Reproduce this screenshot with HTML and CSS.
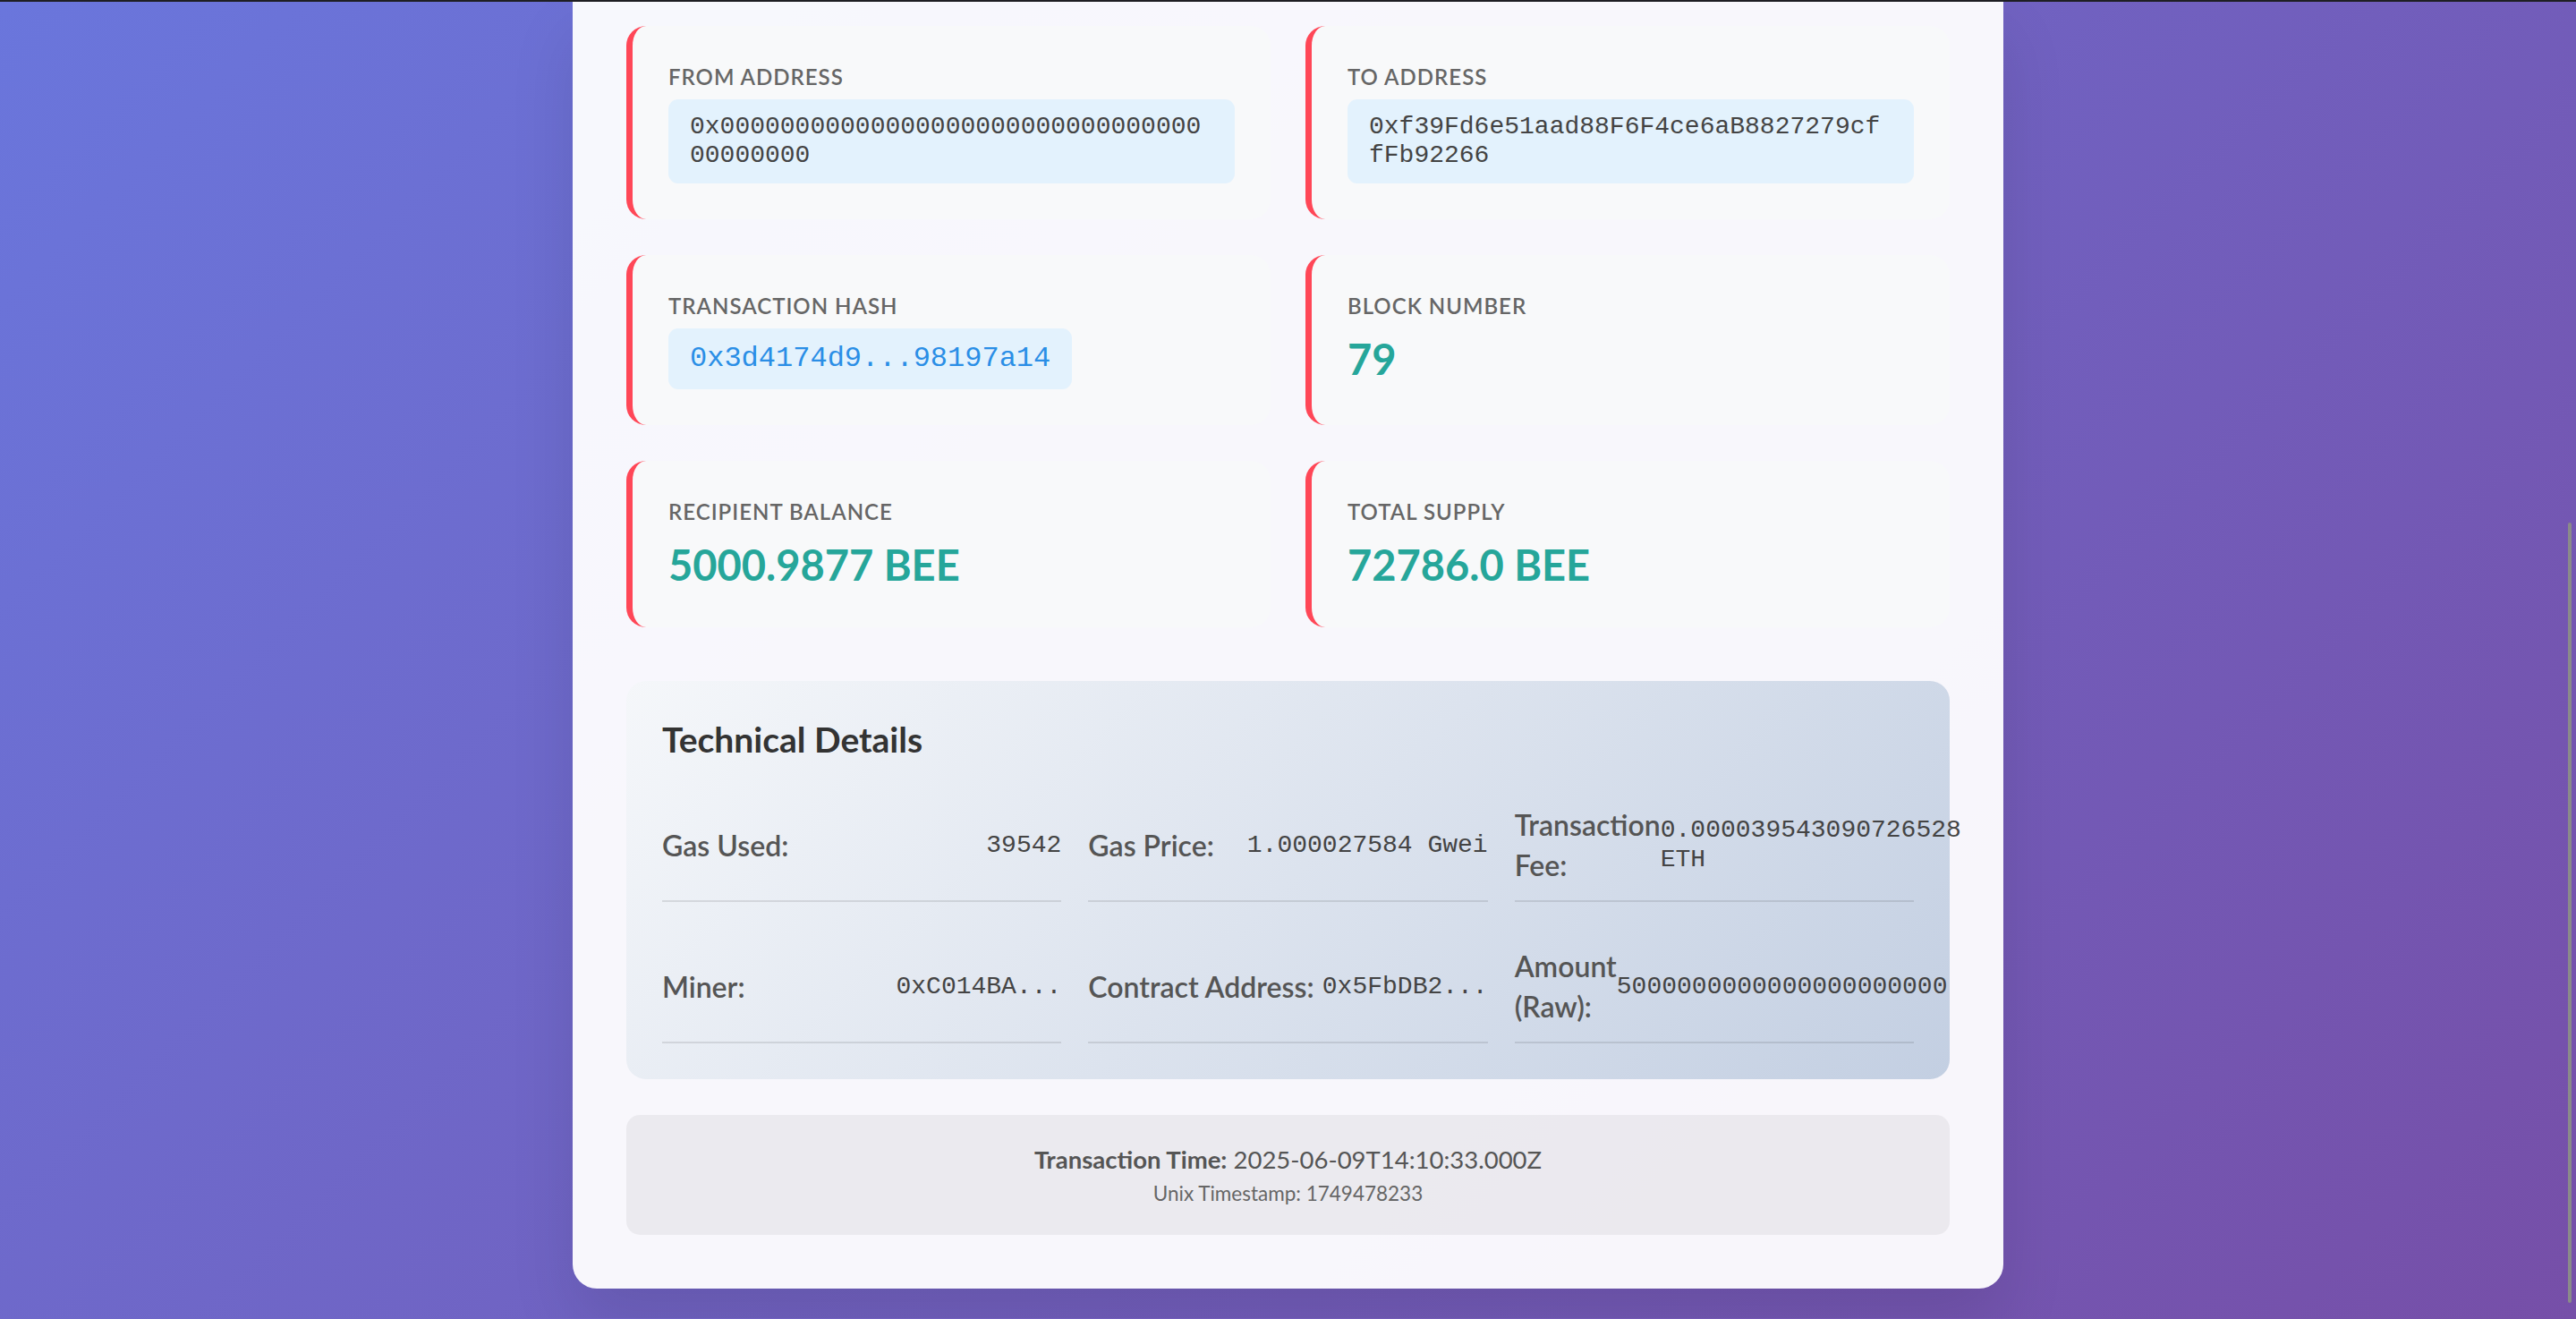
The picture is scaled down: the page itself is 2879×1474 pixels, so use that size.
FILE: index.html
```html
<!DOCTYPE html>
<html lang="en">
<head>
<meta charset="utf-8">
<title>Transaction Details</title>
<link rel="stylesheet" href="styles.css">
</head>
<body>
<div class="topline"></div>
<main class="container">
  <section class="stats">
    <div class="card">
      <div class="label">From Address</div>
      <div class="mono-box">0x0000000000000000000000000000000000000000</div>
    </div>
    <div class="card">
      <div class="label">To Address</div>
      <div class="mono-box">0xf39Fd6e51aad88F6F4ce6aB8827279cffFb92266</div>
    </div>
    <div class="card">
      <div class="label">Transaction Hash</div>
      <div class="hash-box">0x3d4174d9...98197a14</div>
    </div>
    <div class="card">
      <div class="label">Block Number</div>
      <div class="value">79</div>
    </div>
    <div class="card">
      <div class="label">Recipient Balance</div>
      <div class="value">5000.9877 BEE</div>
    </div>
    <div class="card">
      <div class="label">Total Supply</div>
      <div class="value">72786.0 BEE</div>
    </div>
  </section>

  <section class="tech">
    <h3 class="tech-title">Technical Details</h3>
    <div class="tech-grid">
      <div class="item"><span class="t-label">Gas Used:</span><span class="t-value">39542</span></div>
      <div class="item"><span class="t-label">Gas Price:</span><span class="t-value">1.000027584 Gwei</span></div>
      <div class="item"><span class="t-label">Transaction Fee:</span><span class="t-value">0.000039543090726528 ETH</span></div>
      <div class="item"><span class="t-label">Miner:</span><span class="t-value">0xC014BA...</span></div>
      <div class="item"><span class="t-label">Contract Address:</span><span class="t-value">0x5FbDB2...</span></div>
      <div class="item"><span class="t-label">Amount (Raw):</span><span class="t-value">5000000000000000000000</span></div>
    </div>
  </section>

  <section class="time">
    <p class="time-main"><strong>Transaction Time:</strong> 2025-06-09T14:10:33.000Z</p>
    <p class="time-sub">Unix Timestamp: 1749478233</p>
  </section>
</main>
<div class="scroll-thumb"></div>
</body>
</html>
```

FILE: styles.css
```css
html {
  height: 100%;
  overflow: hidden;
  background: linear-gradient(135deg, #6a76dc 0%, #764fa8 100%);
}

body {
  margin: 0;
  padding: 0 0 33px;
  font-family: "Segoe UI", Lato, "Noto Sans", sans-serif;
  color: #333;
}

.topline {
  height: 2px;
  background: #1f1f24;
}

.container {
  width: 1599px;
  margin: 0 auto;
  box-sizing: border-box;
  padding: 27px 60px 60px;
  background: rgba(255, 255, 255, 0.95);
  border-radius: 0 0 27px 27px;
  box-shadow: 0 37px 73px rgba(0, 0, 0, 0.1);
}

.stats {
  display: grid;
  grid-template-columns: 1fr 1fr;
  gap: 40px 39px;
}

.card {
  background: #f8f9fa;
  border-left: 7px solid #ff4757;
  border-radius: 22px;
  padding: 40px;
}

.label {
  font-size: 24px;
  line-height: 34px;
  font-weight: 600;
  color: #666;
  text-transform: uppercase;
  letter-spacing: 1px;
  margin-bottom: 8px;
}

.mono-box,
.hash-box,
.t-value {
  font-family: "Liberation Mono", "Courier New", monospace;
}

.mono-box {
  font-size: 28px;
  line-height: 32px;
  color: #444;
  background: #e3f2fd;
  padding: 15px 24px;
  border-radius: 11px;
  word-break: break-all;
}

.hash-box {
  display: inline-block;
  font-size: 32px;
  line-height: 38px;
  color: #2a8ee6;
  background: #e3f2fd;
  padding: 15px 24px;
  border-radius: 11px;
}

.value {
  font-size: 47px;
  line-height: 64px;
  padding-top: 2px;
  margin-bottom: -2px;
  font-weight: 700;
  color: #26a69a;
}

.tech {
  margin-top: 60px;
  background: linear-gradient(135deg, #f5f7fa 0%, #c3cfe2 100%);
  border-radius: 22px;
  padding: 40px;
}

.tech-title {
  margin: 0 0 30px;
  font-size: 39px;
  line-height: 51px;
  font-weight: 700;
  color: #333;
}

.tech-grid {
  display: grid;
  grid-template-columns: repeat(3, 1fr);
  gap: 32px 30px;
}

.item {
  display: flex;
  justify-content: space-between;
  align-items: center;
  padding: 17px 0;
  border-bottom: 2px solid rgba(0, 0, 0, 0.1);
  min-width: 0;
}

.t-label {
  font-size: 32px;
  line-height: 45px;
  font-weight: 600;
  color: #555;
}

.t-value {
  font-size: 28px;
  line-height: 33px;
  color: #444;
}

.time {
  margin-top: 40px;
  background: rgba(0, 0, 0, 0.05);
  border-radius: 15px;
  padding: 30px 30px 31px;
  text-align: center;
  color: #555;
}

.time-main {
  margin: 0;
  font-size: 27.5px;
  line-height: 39px;
}

.time-sub {
  margin: 4px 0 0;
  font-size: 22.5px;
  line-height: 30px;
  color: #666;
}

.scroll-thumb {
  position: fixed;
  top: 584px;
  right: 5px;
  width: 4px;
  height: 872px;
  border-radius: 2px;
  background: #8a8a8a;
}
```
